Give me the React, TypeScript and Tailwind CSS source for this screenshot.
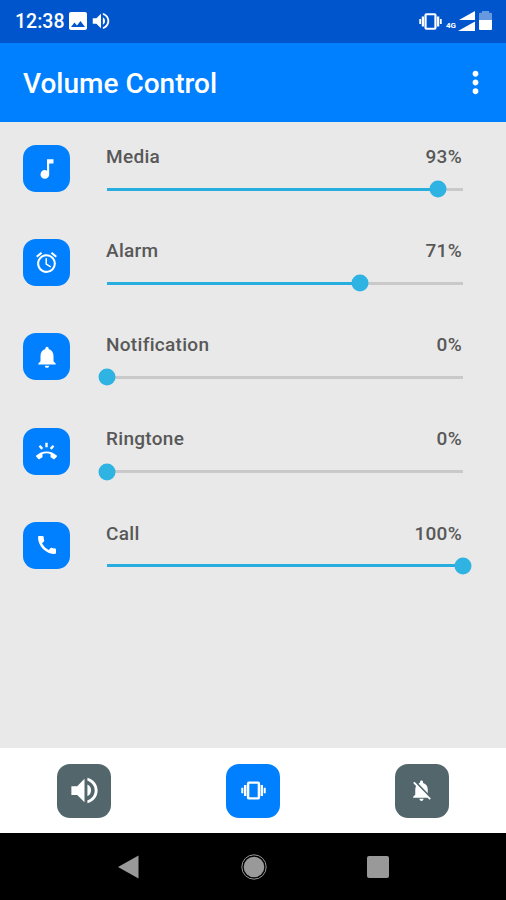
import React from 'react';
import {
    MdAlarm,
    MdCall,
    MdImage,
    MdMoreVert,
    MdMusicNote,
    MdNotifications,
    MdNotificationsOff,
    MdVolumeUp
} from 'react-icons/md';

interface VolumeRowProps {
    icon: React.ReactNode;
    label: string;
    value: number;
}

const VolumeRow: React.FC<VolumeRowProps> = ({ icon, label, value }) => {
    return (
        <div className="flex h-[94.2px] items-start pl-[23px] pr-[43px]">
            <div className="flex size-[47px] shrink-0 items-center justify-center rounded-[13px] bg-[#0080ff] text-white">
                {icon}
            </div>
            <div className="ml-[36px] flex-1">
                <div className="flex h-6 items-center justify-between pr-[1px] text-[19px] font-medium tracking-[0.3px] text-[#585858]">
                    <span>{label}</span>
                    <span>{value}%</span>
                </div>
                <div className="relative ml-[1px] mt-[18.5px] h-[3px] bg-[#c9c9c9]">
                    <div className="h-full bg-[#27aedf]" style={{ width: `${value}%` }} />
                    <div
                        className="absolute top-1/2 size-[17px] -translate-x-1/2 -translate-y-1/2 rounded-full bg-[#2fb3e3]"
                        style={{ left: `${value}%` }}
                    />
                </div>
            </div>
        </div>
    );
};

interface ModeButtonProps {
    active?: boolean;
    children: React.ReactNode;
}

const ModeButton: React.FC<ModeButtonProps> = ({ active = false, children }) => {
    return (
        <div className="flex flex-1 justify-center">
            <button
                className={`flex size-[54px] items-center justify-center rounded-[13px] text-white ${
                    active ? 'bg-[#0080ff]' : 'bg-[#52666c]'
                }`}
            >
                {children}
            </button>
        </div>
    );
};

const VibrateIcon = ({ size }: { size: number }) => (
    <svg width={size} height={size} viewBox="0 0 25 25" fill="currentColor">
        <rect x="7.1" y="4.6" width="10.8" height="15.8" rx="1" fill="none" stroke="currentColor" strokeWidth="2.4" />
        <path d="M3 7h2.4v11H3zM19.6 7H22v11h-2.4z" />
        <path d="M.3 9.7h2v5.6h-2zM22.7 9.7h2v5.6h-2z" />
    </svg>
);

const RingIcon = () => (
    <svg width="21" height="21" viewBox="0 0 24 24" fill="currentColor">
        <path d="M23.7 16.7C20.7 13.8 16.5 12 12 12S3.3 13.8.3 16.7c-.4.4-.4 1 0 1.4l2.5 2.5c.4.4 1 .4 1.4 0 .8-.7 1.7-1.4 2.7-1.8.3-.2.5-.5.5-.9v-3.1c1.5-.5 3-.7 4.6-.7s3.2.2 4.6.7v3.1c0 .4.2.7.6.9 1 .5 1.8 1.1 2.6 1.8.4.4 1 .4 1.4 0l2.5-2.5c.4-.4.4-1 0-1.4z" />
        <path d="M12 2v5.2M4 5.5l3.2 3.5M20 5.5l-3.2 3.5" fill="none" stroke="currentColor" strokeWidth="2.7" />
    </svg>
);

const StatusBar = () => (
    <div className="flex h-[43px] items-center bg-[#0055cc] pl-[15px] pr-[14px] text-white">
        <span className="text-[19.5px] font-medium">12:38</span>
        <MdImage size={24} className="ml-[2px] -translate-y-px" />
        <MdVolumeUp size={22} className="-translate-y-px" />
        <div className="flex-1" />
        <VibrateIcon size={23} />
        <span className="ml-[4px] mt-[9px] text-[8px] font-bold leading-none">4G</span>
        {/* two stacked signal wedges */}
        <svg width="17" height="20" viewBox="0 0 17 20" className="ml-[2px] -translate-y-px" fill="currentColor">
            <path d="M17 0v9H1z" />
            <path d="M17 10.5V20H0z" />
        </svg>
        <svg width="13" height="19" viewBox="0 0 13 19" className="ml-1 -translate-y-px" fill="currentColor">
            <path opacity="0.4" d="M3 1.8V0h7v1.8h2q1 0 1 1V9H0V2.8q0-1 1-1z" />
            <path d="M0 9h13v9q0 1-1 1H1q-1 0-1-1z" />
        </svg>
    </div>
);

const NavBar = () => (
    <div className="flex h-[67px] items-center justify-center gap-[100px] bg-black text-[#999]">
        <svg width="24" height="26" viewBox="0 0 24 26" fill="currentColor">
            <path d="M1 13 21.5 1.5v23z" />
        </svg>
        <svg width="26" height="26" viewBox="0 0 26 26" fill="currentColor">
            <circle cx="13" cy="13" r="10.3" />
            <circle cx="13" cy="13" r="12.2" fill="none" stroke="currentColor" strokeWidth="1" />
        </svg>
        <div className="size-[22px] rounded-[2px] bg-[#999]" />
    </div>
);

const App = () => {
    return (
        <div className="flex h-[900px] w-[506px] flex-col overflow-hidden bg-[#e9e9e9] font-['Roboto',sans-serif]">
            <StatusBar />
            <div className="flex h-[78.5px] items-center justify-between bg-[#0080ff] pl-[23px] pr-[13px] text-white">
                <h1 className="pt-[3px] text-[28px] font-medium">Volume Control</h1>
                <MdMoreVert size={35} />
            </div>
            <div className="flex-1 pt-[23.5px]">
                <VolumeRow icon={<MdMusicNote size={26} />} label="Media" value={93} />
                <VolumeRow icon={<MdAlarm size={25} />} label="Alarm" value={71} />
                <VolumeRow icon={<MdNotifications size={26} />} label="Notification" value={0} />
                <VolumeRow icon={<RingIcon />} label="Ringtone" value={0} />
                <VolumeRow icon={<MdCall size={24} />} label="Call" value={100} />
            </div>
            <div className="flex h-[85px] items-center bg-white">
                <ModeButton>
                    <MdVolumeUp size={35} />
                </ModeButton>
                <ModeButton active>
                    <VibrateIcon size={25} />
                </ModeButton>
                <ModeButton>
                    <MdNotificationsOff size={25} />
                </ModeButton>
            </div>
            <NavBar />
        </div>
    );
};

export default App;
